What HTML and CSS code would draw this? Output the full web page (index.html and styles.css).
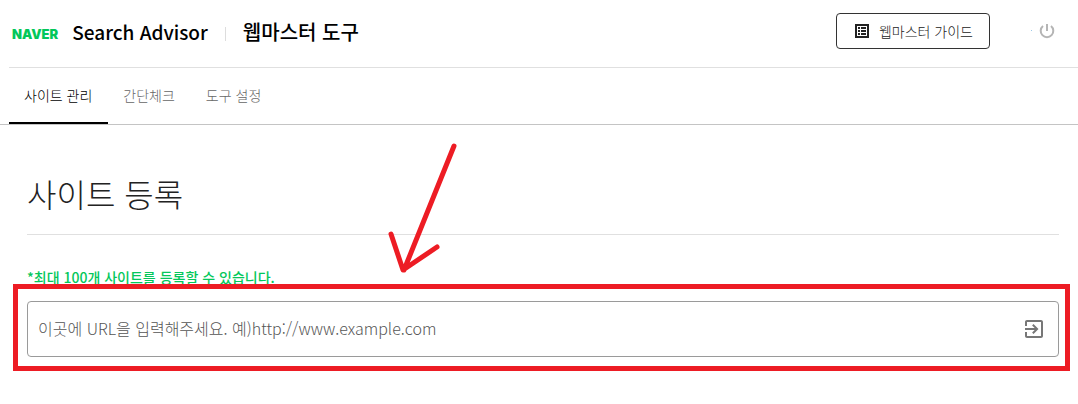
FILE: index.html
```html
<!DOCTYPE html>
<html lang="ko">
<head>
<meta charset="utf-8">
<title>Search Advisor</title>
<link rel="stylesheet" href="styles.css">
</head>
<body>
<header class="header">
  <span class="logo">NAVER</span>
  <span class="product">Search Advisor</span>
  <span class="divider"></span>
  <span class="tool">웹마스터 도구</span>
  <button class="guide" type="button">
    <svg class="guide-icon" viewBox="0 0 18 18" aria-hidden="true"><path fill-rule="evenodd" d="M2 2h14v14H2zM4 4v10h10V4zM5 5h2v2H5zM8 5h5v2H8zM5 8h2v2H5zM8 8h5v2H8zM5 11h2v2H5zM8 11h5v2H8z"/></svg>
    <span>웹마스터 가이드</span>
  </button>
  <span class="dot"></span>
  <button class="power" type="button" aria-label="로그아웃">
    <svg class="power-icon" viewBox="0 0 18 18" aria-hidden="true"><path d="M9 2v7M5 4a6.300 6.300 0 1 0 8 0"/></svg>
  </button>
</header>
<nav class="tabs">
  <a class="tab tab-active" href="#manage">사이트 관리</a>
  <a class="tab" href="#check">간단체크</a>
  <a class="tab" href="#settings">도구 설정</a>
</nav>
<main class="main">
  <h1 class="title">사이트 등록</h1>
  <label class="note" for="url">*최대 100개 사이트를 등록할 수 있습니다.</label>
  <form class="field">
    <input class="url" id="url" type="text" placeholder="이곳에 URL을 입력해주세요. 예)http://www.example.com">
    <button class="submit" type="button" aria-label="등록">
      <svg class="submit-icon" viewBox="0 0 24 24" aria-hidden="true"><path d="M10.090 15.590L11.500 17l5-5-5-5-1.410 1.410L12.670 11H3v2h9.670l-2.580 2.590zM19 3H5c-1.110 0-2 .9-2 2v4h2V5h14v14H5v-4H3v4c0 1.100.890 2 2 2h14c1.100 0 2-.9 2-2V5c0-1.100-.9-2-2-2z"/></svg>
    </button>
    <span class="highlight"></span>
  </form>
  <svg class="arrow" viewBox="0 0 70 134" aria-hidden="true"><path d="M69 5L19 129M6 93l12 36 34-23"/></svg>
</main>
</body>
</html>
```
FILE: styles.css
```css
* {
  box-sizing: border-box;
}

body {
  margin: 0;
  background: #fff;
  color: #222;
  font-family: "Noto Sans CJK KR", sans-serif;
  font-size: 14px;
}

button {
  padding: 0;
  border: 0;
  background: none;
  font: inherit;
  color: inherit;
}

svg {
  display: block;
  fill: currentColor;
}

.header {
  display: flex;
  align-items: center;
  height: 68px;
  margin-left: 9px;
  padding: 0 22px 6px 3px;
  border-bottom: 1px solid #e0e0e0;
  color: #000;
  white-space: nowrap;
}

.logo {
  padding-top: 6px;
  color: #03c75a;
  font: 900 13px/16px Inter, sans-serif;
}

.product,
.tool {
  padding-top: 3px;
  font-size: 20px;
  font-weight: 500;
  line-height: 28px;
}

.product {
  margin-left: 14px;
  font-size: 19px;
}

.divider {
  width: 1px;
  height: 14px;
  margin: 6px 17px 0;
  background: #ddd;
}

.guide {
  display: flex;
  align-items: center;
  gap: 8px;
  height: 36px;
  margin-left: auto;
  padding: 0 16px;
  border: 1px solid #333;
  border-radius: 4px;
  color: #222;
  font-weight: 300;
  line-height: 20px;
}

.guide-icon {
  width: 18px;
  height: 18px;
}

.dot {
  width: 1px;
  height: 1px;
  margin: 0 6px 0 41px;
  background: #9cc8e8;
}

.power {
  color: #b5b5b5;
}

.power-icon {
  width: 18px;
  height: 18px;
  fill: none;
  stroke: currentColor;
  stroke-width: 2;
}

.tabs {
  display: flex;
  height: 57px;
  padding-left: 9px;
  border-bottom: 1px solid #c4c4c4;
}

.tab {
  padding: 0 16px 0 15px;
  border-bottom: 2px solid transparent;
  color: #666;
  font-weight: 300;
  line-height: 54px;
  text-decoration: none;
}

.tab-active {
  border-color: #000;
  color: #000;
}

.main {
  position: relative;
  padding: 44px 19px 32px 27px;
}

.title {
  margin: 0 0 32px;
  padding-bottom: 16px;
  border-bottom: 1px solid #e0e0e0;
  font-size: 32px;
  font-weight: 300;
  line-height: 49px;
}

.note {
  display: block;
  margin-bottom: 14px;
  color: #03c75a;
  font-weight: 500;
  line-height: 20px;
}

.field {
  position: relative;
  display: flex;
  align-items: center;
  height: 56px;
  margin: 0;
  padding: 0 12px 0 10px;
  border: 1px solid #9a9a9a;
  border-radius: 4px;
}

.url {
  flex: 1;
  min-width: 0;
  padding: 0 0 3px;
  border: 0;
  outline: 0;
  background: none;
  color: #222;
  font: 300 16px/24px "Noto Sans CJK KR", sans-serif;
}

.url::placeholder {
  color: #555;
  opacity: 1;
}

.submit {
  color: #777;
}

.submit-icon {
  width: 24px;
  height: 24px;
}

.highlight {
  position: absolute;
  inset: -18px -12px -15px -15px;
  border: 5px solid #ed1c24;
  pointer-events: none;
}

.arrow {
  position: absolute;
  top: 16px;
  left: 385px;
  width: 70px;
  height: 134px;
  overflow: visible;
  fill: none;
  stroke: #ed1c24;
  stroke-width: 5;
  stroke-linecap: round;
  stroke-linejoin: round;
}
```
